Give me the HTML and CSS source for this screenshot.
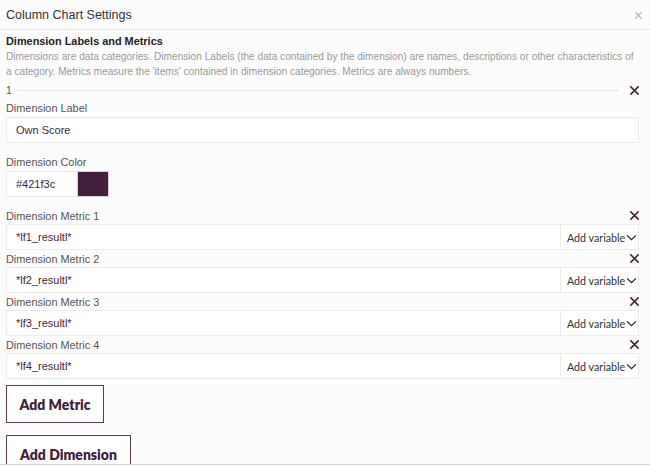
FILE: index.html
```html
<!DOCTYPE html>
<html>
<head>
<meta charset="utf-8">
<link rel="stylesheet" href="styles.css">
</head>
<body>
<div class="modal">
  <div class="header">
    <span class="title">Column Chart Settings</span>
    <span class="close">×</span>
  </div>
  <div class="content">
    <div class="section-title">Dimension Labels and Metrics</div>
    <p class="desc">Dimensions are data categories. Dimension Labels (the data contained by the dimension) are names, descriptions or other characteristics of<br>a category. Metrics measure the 'items' contained in dimension categories. Metrics are always numbers.</p>
    <div class="dim-row">
      <span class="num">1</span>
      <span class="rule"></span>
      <svg class="x" viewBox="0 0 12 12"><path d="M1.5 1.5L10.5 10.5M10.5 1.5L1.5 10.5"/></svg>
    </div>
    <div class="label first">Dimension Label</div>
    <div class="input"><span>Own Score</span></div>
    <div class="label gap">Dimension Color</div>
    <div class="color-row">
      <div class="input color-input"><span>#421f3c</span></div>
      <div class="swatch"></div>
    </div>
    <div class="metric metric-first">
      <div class="label-row"><span class="label">Dimension Metric 1</span><svg class="x" viewBox="0 0 12 12"><path d="M1.5 1.5L10.5 10.5M10.5 1.5L1.5 10.5"/></svg></div>
      <div class="input var-input"><span class="val">*lf1_resultl*</span><span class="addvar">Add variable<svg viewBox="0 0 12 8"><path d="M1 1.5L6 6.5L11 1.5"/></svg></span></div>
    </div>
    <div class="metric">
      <div class="label-row"><span class="label">Dimension Metric 2</span><svg class="x" viewBox="0 0 12 12"><path d="M1.5 1.5L10.5 10.5M10.5 1.5L1.5 10.5"/></svg></div>
      <div class="input var-input"><span class="val">*lf2_resultl*</span><span class="addvar">Add variable<svg viewBox="0 0 12 8"><path d="M1 1.5L6 6.5L11 1.5"/></svg></span></div>
    </div>
    <div class="metric">
      <div class="label-row"><span class="label">Dimension Metric 3</span><svg class="x" viewBox="0 0 12 12"><path d="M1.5 1.5L10.5 10.5M10.5 1.5L1.5 10.5"/></svg></div>
      <div class="input var-input"><span class="val">*lf3_resultl*</span><span class="addvar">Add variable<svg viewBox="0 0 12 8"><path d="M1 1.5L6 6.5L11 1.5"/></svg></span></div>
    </div>
    <div class="metric">
      <div class="label-row"><span class="label">Dimension Metric 4</span><svg class="x" viewBox="0 0 12 12"><path d="M1.5 1.5L10.5 10.5M10.5 1.5L1.5 10.5"/></svg></div>
      <div class="input var-input"><span class="val">*lf4_resultl*</span><span class="addvar">Add variable<svg viewBox="0 0 12 8"><path d="M1 1.5L6 6.5L11 1.5"/></svg></span></div>
    </div>
    <button class="btn btn-metric">Add Metric</button>
    <button class="btn btn-dim">Add Dimension</button>
  </div>
  <div class="footer"></div>
</div>
</body>
</html>
```

FILE: styles.css
```css
* { box-sizing: border-box; }
html, body { margin: 0; padding: 0; }
body {
  font-family: "Liberation Sans", Arial, sans-serif;
  background: #ffffff;
  color: #555;
}
.modal {
  width: 650px;
  height: 466px;
  display: flex;
  flex-direction: column;
  overflow: hidden;
  background: #fcfcfc;
}
.header {
  height: 30px;
  flex: none;
  display: flex;
  align-items: center;
  justify-content: space-between;
  padding: 0 6px 0 6px;
  border-bottom: 1px solid #e5e5e5;
  background: #fcfcfc;
}
.title {
  font-size: 12.5px;
  color: #333;
}
.close {
  font-size: 16px;
  color: #b5b5b5;
  margin-right: 1px;
  margin-top: 2px;
}
.content {
  flex: 1;
  min-height: 0;
  overflow: hidden;
  padding: 4px 11px 0 6px;
  display: flex;
  flex-direction: column;
  align-items: stretch;
}
.content > * { flex: none; }
.section-title {
  font-weight: bold;
  font-size: 10.9px;
  color: #222;
  line-height: 14px;
}
.desc {
  margin: 1px -10px 0 0;
  font-size: 10.15px;
  line-height: 15px;
  color: #9a9a9a;
  white-space: nowrap;
}
.dim-row {
  display: flex;
  align-items: center;
  height: 16px;
  margin-top: 3px;
  gap: 6px;
}
.num { font-size: 10.5px; color: #555; }
.rule {
  flex: 1;
  height: 1px;
  background: #e6e6e6;
  margin-right: 4px;
}
.x {
  width: 11px;
  height: 11px;
  flex: none;
  margin-right: -1px;
}
.x path {
  stroke: #421f3c;
  stroke-width: 1.6;
  fill: none;
}
.label {
  font-size: 10.9px;
  color: #555;
  line-height: 16px;
  margin-top: 1px;
}
.label.first { margin-top: 2px; }
.label.gap { margin-top: 11px; }
.input {
  height: 26px;
  flex: none;
  background: #fff;
  border: 1px solid #ebebeb;
  display: flex;
  align-items: center;
  padding-left: 9px;
  font-size: 11px;
  color: #421f3c;
  margin-top: 1px;
}
.color-row {
  display: flex;
  align-items: stretch;
  margin-top: 1px;
}
.color-input {
  width: 71px;
  margin-top: 0;
  border-right: none;
}
.swatch {
  width: 32px;
  height: 26px;
  background: #421f3c;
  border: 1px solid #d8d0d6;
}
.metric { display: flex; flex-direction: column; }
.metric-first { margin-top: 10px; }
.label-row {
  display: flex;
  align-items: center;
  justify-content: space-between;
  height: 17px;
  flex: none;
}
.label-row .label { margin-top: 0; }
.var-input {
  margin-top: 0;
  padding-right: 0;
  justify-content: space-between;
}
.addvar {
  width: 78px;
  height: 100%;
  border-left: 1px solid #ebebeb;
  display: flex;
  align-items: center;
  justify-content: flex-start;
  padding-left: 6px;
  font-family: "Lato", sans-serif;
  font-size: 10.7px;
  color: #333;
  white-space: nowrap;
}
.addvar svg {
  width: 11px;
  height: 7px;
  margin-left: 1px;
}
.addvar svg path {
  stroke: #222;
  stroke-width: 1.4;
  fill: none;
}
.btn {
  align-self: flex-start;
  background: #fff;
  border: 1px solid #5a3a55;
  color: #421f3c;
  font-family: "Lato", sans-serif;
  font-weight: 800;
  font-size: 14px;
  height: 38px;
  padding: 0;
  white-space: nowrap;
  text-align: center;
}
.btn-metric { margin-top: 6px; width: 98px; }
.btn-dim { margin-top: 12px; width: 125px; }
.footer {
  height: 2px;
  flex: none;
  border-top: 1px solid #cfcfcf;
  background: #fff;
}
```
